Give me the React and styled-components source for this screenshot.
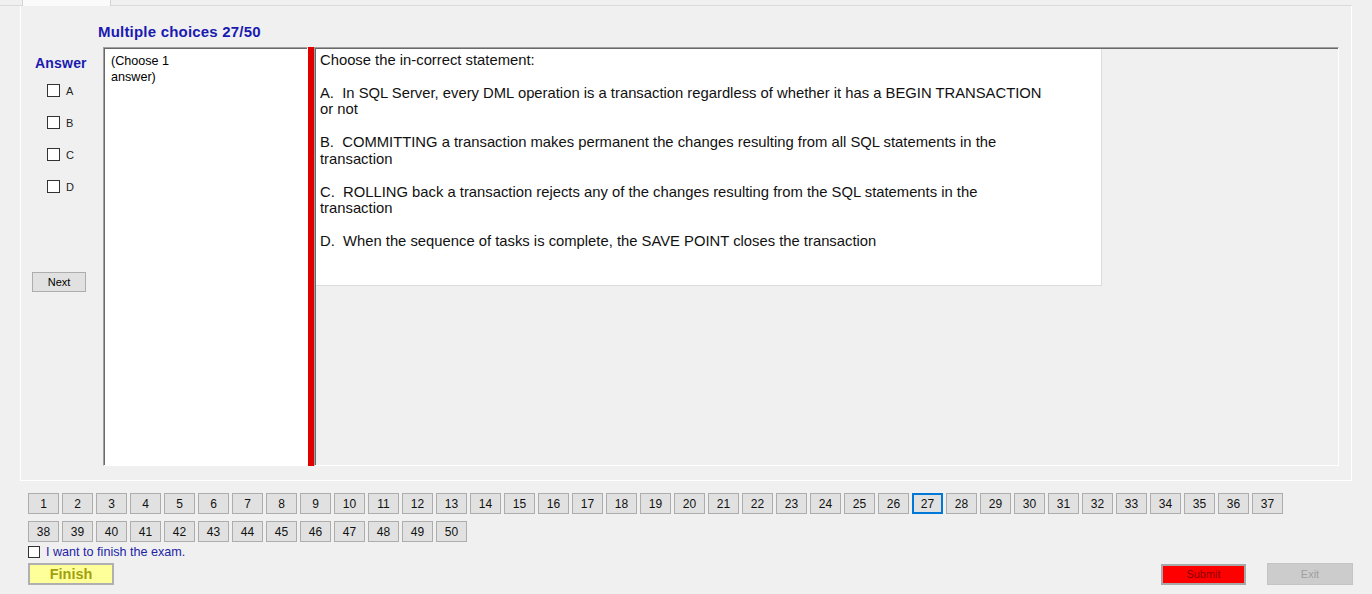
import styled, { createGlobalStyle } from 'styled-components';

const GlobalStyle = createGlobalStyle`
  * { box-sizing: border-box; }
  html, body { margin: 0; padding: 0; background: #f0f0f0; }
  body { font-family: 'Liberation Sans', Arial, sans-serif; }
`;

// ── Layout ─────────────────────────────────────────────────────────────────────
const Page = styled.div`
  width: 1372px;
  height: 594px;
  overflow: hidden;
  background: #f0f0f0;
  color: #000;
  display: flex;
  flex-direction: column;
`;

const TabStrip = styled.div`
  height: 6px;
  display: flex;
  padding-left: 22px;
  margin-right: 20px;
  border-bottom: 1px solid #dadada;
  flex-shrink: 0;
`;

const TabHeader = styled.div`
  width: 89px;
  height: 6px;
  background: #fbfbfb;
  border-left: 1px solid #d4d4d4;
  border-right: 1px solid #d4d4d4;
`;

const TabPage = styled.section`
  margin: 0 20px;
  height: 475px;
  border: 1px solid #fff;
  border-top: none;
  padding-top: 18px;
  display: flex;
  flex-direction: column;
  flex-shrink: 0;
`;

const Title = styled.h1`
  margin: 0 0 7px 77px;
  font-size: 15px;
  line-height: 16px;
  font-weight: 700;
  letter-spacing: 0.2px;
  color: #1a1ab0;
`;

const Body = styled.div`
  display: flex;
  height: 419px;
  margin-right: 12px;
`;

// ── Answer column ──────────────────────────────────────────────────────────────
const AnswerCol = styled.div`
  width: 82px;
  padding-top: 9px;
  display: flex;
  flex-direction: column;
  flex-shrink: 0;
`;

const AnswerLabel = styled.div`
  margin-left: 14px;
  font-size: 14px;
  line-height: 15px;
  font-weight: 700;
  letter-spacing: 0.2px;
  color: #1a1ab0;
`;

const OptionList = styled.div`
  margin: 13px 0 0 26px;
  display: flex;
  flex-direction: column;
  gap: 19px;
`;

const OptionRow = styled.label`
  display: flex;
  align-items: center;
  gap: 6px;
  height: 13px;
  font-size: 11px;
  color: #222;
`;

const Box = styled.span`
  width: ${(p) => p.$size}px;
  height: ${(p) => p.$size}px;
  background: #fff;
  border: 1px solid #333;
  flex-shrink: 0;
`;

const SmallButton = styled.button`
  width: 54px;
  height: 20px;
  margin: 79px 0 0 11px;
  padding: 0;
  background: #e1e1e1;
  border: 1px solid #adadad;
  font-family: 'Liberation Sans', Arial, sans-serif;
  font-size: 11px;
  color: #000;
`;

// ── Question area ──────────────────────────────────────────────────────────────
const ChooseBox = styled.div`
  width: 205px;
  height: 100%;
  background: #fff;
  border-top: 1px solid #a0a0a0;
  border-left: 1px solid #a0a0a0;
  border-right: 1px solid #fff;
  border-bottom: 1px solid #fff;
  box-shadow: inset 1px 1px 0 #696969;
  padding: 5px 0 0 7px;
  font-size: 12.6px;
  line-height: 16px;
  flex-shrink: 0;
`;

const Splitter = styled.div`
  width: 6px;
  height: 100%;
  background: #e00000;
  flex-shrink: 0;
`;

const QuestionPanel = styled.div`
  flex: 1;
  height: 100%;
  border-top: 1px solid #a0a0a0;
  border-left: 1px solid #a0a0a0;
  border-right: 1px solid #fff;
  border-bottom: 1px solid #fff;
  box-shadow: inset 1px 1px 0 #696969;
  padding: 1px 0 0 1px;
`;

const QuestionBox = styled.div`
  width: 786px;
  height: 237px;
  background: #fff;
  border-right: 1px solid #dcdcdc;
  border-bottom: 1px solid #dcdcdc;
  padding: 3px 4px;
  font-size: 14.8px;
  line-height: 16.45px;
  white-space: pre;
  color: #111;
`;

// ── Footer ─────────────────────────────────────────────────────────────────────
const Footer = styled.footer`
  padding: 12px 19px 0 28px;
  display: flex;
  flex-direction: column;
`;

const NumberGrid = styled.div`
  display: grid;
  grid-template-columns: repeat(37, 31px);
  column-gap: 3px;
  row-gap: 7px;
`;

const NumButton = styled.button`
  height: 21px;
  padding: 0;
  background: #e1e1e1;
  border: ${(p) => (p.$current ? '2px solid #0078d7' : '1px solid #adadad')};
  font-family: 'Liberation Sans', Arial, sans-serif;
  font-size: 12px;
  color: #111;
`;

const FinishCheck = styled.label`
  margin-top: 3px;
  display: flex;
  align-items: center;
  gap: 6px;
  height: 13px;
  font-size: 12.6px;
  color: #2323a6;
`;

const Actions = styled.div`
  margin-top: 5px;
  display: flex;
  justify-content: space-between;
  align-items: center;
`;

const RightActions = styled.div`
  display: flex;
  align-items: center;
  gap: 21px;
`;

const FinishButton = styled.button`
  width: 86px;
  height: 22px;
  padding: 0;
  background: #ffff99;
  border: 2px solid #b0b0b0;
  font-family: 'Liberation Sans', Arial, sans-serif;
  font-size: 14.5px;
  font-weight: 700;
  color: #a0a010;
`;

const FlatButton = styled.button`
  width: ${(p) => p.$w}px;
  height: ${(p) => p.$h}px;
  padding: 0;
  background: ${(p) => p.$bg};
  border: ${(p) => p.$border};
  font-family: 'Liberation Sans', Arial, sans-serif;
  font-size: 11px;
  color: ${(p) => p.$fg};
`;

const QUESTION = [
  'Choose the in-correct statement:',
  '',
  'A.  In SQL Server, every DML operation is a transaction regardless of whether it has a BEGIN TRANSACTION',
  'or not',
  '',
  'B.  COMMITTING a transaction makes permanent the changes resulting from all SQL statements in the',
  'transaction',
  '',
  'C.  ROLLING back a transaction rejects any of the changes resulting from the SQL statements in the',
  'transaction',
  '',
  'D.  When the sequence of tasks is complete, the SAVE POINT closes the transaction',
].join('\n');

const OPTIONS = ['A', 'B', 'C', 'D'];
const NUMBERS = Array.from({ length: 50 }, (_, i) => i + 1);

// ── Component ──────────────────────────────────────────────────────────────────
export default function App() {
  const current = 27;

  return (
    <>
      <GlobalStyle />
      <Page>
        <TabStrip>
          <TabHeader />
        </TabStrip>

        <TabPage>
          <Title>Multiple choices {current}/50</Title>
          <Body>
            <AnswerCol>
              <AnswerLabel>Answer</AnswerLabel>
              <OptionList>
                {OPTIONS.map((o) => (
                  <OptionRow key={o}>
                    <Box $size={13} />
                    {o}
                  </OptionRow>
                ))}
              </OptionList>
              <SmallButton>Next</SmallButton>
            </AnswerCol>

            <ChooseBox>
              (Choose 1<br />answer)
            </ChooseBox>
            <Splitter />
            <QuestionPanel>
              <QuestionBox>{QUESTION}</QuestionBox>
            </QuestionPanel>
          </Body>
        </TabPage>

        <Footer>
          <NumberGrid>
            {NUMBERS.map((n) => (
              <NumButton key={n} $current={n === current}>{n}</NumButton>
            ))}
          </NumberGrid>
          <FinishCheck>
            <Box $size={12} />
            I want to finish the exam.
          </FinishCheck>
          <Actions>
            <FinishButton>Finish</FinishButton>
            <RightActions>
              <FlatButton $w={85} $h={21} $bg="#ff0000" $fg="#8b0000" $border="2px solid #a8a8a8">
                Submit
              </FlatButton>
              <FlatButton $w={86} $h={22} $bg="#cccccc" $fg="#a0a0a0" $border="1px solid #c4c4c4">
                Exit
              </FlatButton>
            </RightActions>
          </Actions>
        </Footer>
      </Page>
    </>
  );
}
